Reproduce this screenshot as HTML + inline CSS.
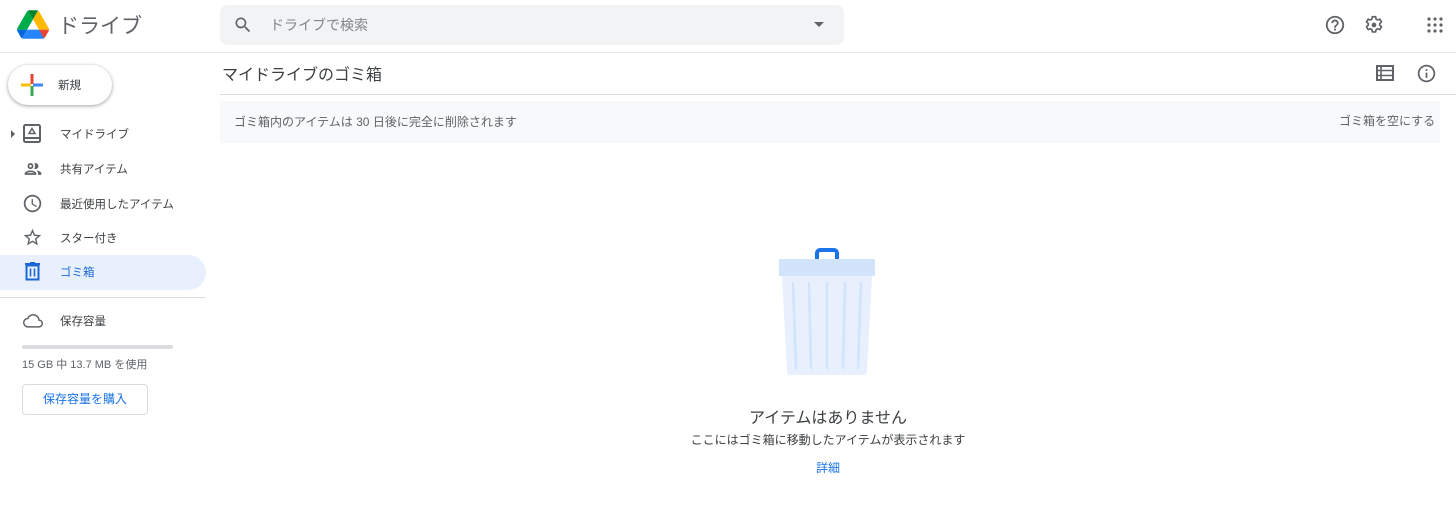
<!DOCTYPE html>
<html><head><meta charset="utf-8"><style>
*{margin:0;padding:0;box-sizing:border-box}
body{width:1456px;height:524px;background:#fff;font-family:"Liberation Sans","Noto Sans CJK JP",sans-serif;color:#3c4043;position:relative;overflow:hidden}
.a{position:absolute}
.t{font-size:11.5px;color:#3c4043}
</style></head><body>
<svg class="a" style="left:17px;top:10px" width="32" height="29" viewBox="0 0 87.3 78">
<path d="M6.6 66.85l3.85 6.65c.8 1.4 1.95 2.5 3.3 3.3L27.5 53H0c0 1.55.4 3.1 1.2 4.5z" fill="#0066da"/>
<path d="M43.65 25L29.9 1.2c-1.35.8-2.5 1.9-3.3 3.3L1.2 48.5A9.06 9.06 0 000 53h27.5z" fill="#00ac47"/>
<path d="M73.55 76.8c1.35-.8 2.5-1.9 3.3-3.3l1.6-2.75 7.650-13.25c.8-1.4 1.2-2.95 1.2-4.5H59.8l5.85 11.5z" fill="#ea4335"/>
<path d="M43.65 25L57.4 1.2C56.05.4 54.5 0 52.9 0H34.4c-1.6 0-3.15.45-4.5 1.2z" fill="#00832d"/>
<path d="M59.8 53H27.5L13.75 76.8c1.35.8 2.9 1.2 4.5 1.2h50.8c1.6 0 3.15-.45 4.5-1.2z" fill="#2684fc"/>
<path d="M73.4 26.5L60.7 4.5c-.8-1.4-1.950-2.5-3.3-3.3L43.65 25 59.8 53h27.45c0-1.55-.4-3.1-1.2-4.5z" fill="#ffba00"/>
</svg>
<div class="a" style="left:58px;top:10px;font-size:21px;color:#5f6368">ドライブ</div>
<div class="a" style="left:220px;top:5px;width:624px;height:40px;background:#f1f3f4;border-radius:8px"></div>
<svg class="a" style="left:233px;top:15px" width="20" height="20" viewBox="0 0 24 24"><path fill="#5f6368" d="M15.5 14h-.79l-.28-.27A6.47 6.47 0 0016 9.5 6.5 6.5 0 109.5 16c1.61 0 3.09-.59 4.23-1.57l.27.28v.79l5 4.99L20.49 19zm-6 0C7.01 14 5 11.99 5 9.5S7.01 5 9.5 5 14 7.01 14 9.5 11.99 14 9.5 14z"/></svg>
<div class="a" style="left:270px;top:15px;font-size:14px;color:#80868b">ドライブで検索</div>
<div class="a" style="left:814px;top:22px;border-left:5px solid transparent;border-right:5px solid transparent;border-top:5px solid #5f6368"></div>
<svg class="a" style="left:1324px;top:14px" width="22" height="22" viewBox="0 0 24 24"><path fill="#5f6368" d="M11 18h2v-2h-2v2zm1-16C6.48 2 2 6.48 2 12s4.48 10 10 10 10-4.48 10-10S17.52 2 12 2zm0 18c-4.41 0-8-3.59-8-8s3.59-8 8-8 8 3.59 8 8-3.59 8-8 8zm0-14c-2.210 0-4 1.79-4 4h2c0-1.1.9-2 2-2s2 .9 2 2c0 2-3 1.75-3 5h2c0-2.25 3-2.5 3-5 0-2.21-1.79-4-4-4z"/></svg>
<svg class="a" style="left:1363px;top:14px" width="22" height="22" viewBox="0 0 24 24"><path fill="none" stroke="#5f6368" stroke-width="1.8" stroke-linejoin="round" d="M10.2 3h3.6l.5 2.6 1.6.9 2.5-.9 1.8 3.1-2 1.7v1.8l2 1.7-1.8 3.1-2.5-.9-1.6.9-.5 2.6h-3.6l-.5-2.6-1.6-.9-2.5.9-1.8-3.1 2-1.7v-1.8l-2-1.7 1.8-3.1 2.5.9 1.6-.9z"/><circle cx="12" cy="12" r="2.6" fill="#5f6368"/></svg>
<svg class="a" style="left:1427px;top:17px" width="16" height="16" viewBox="0 0 16 16" fill="#5f6368"><circle cx="2" cy="2" r="1.6"/><circle cx="8" cy="2" r="1.6"/><circle cx="14" cy="2" r="1.6"/><circle cx="2" cy="8" r="1.6"/><circle cx="8" cy="8" r="1.6"/><circle cx="14" cy="8" r="1.6"/><circle cx="2" cy="14" r="1.6"/><circle cx="8" cy="14" r="1.6"/><circle cx="14" cy="14" r="1.6"/></svg>
<div class="a" style="left:0;top:52px;width:1456px;height:1px;background:#e8eaed"></div>
<div class="a" style="left:8px;top:65px;width:104px;height:40px;border-radius:20px;background:#fff;box-shadow:0 1px 3px rgba(60,64,67,.3),0 1px 3px 1px rgba(60,64,67,.15)"></div>
<svg class="a" style="left:21px;top:74px" width="22" height="22" viewBox="0 0 22 22"><rect x="9.5" y="0" width="3" height="10" fill="#ea4335"/><rect x="12" y="9.5" width="10" height="3" fill="#4285f4"/><rect x="9.5" y="12" width="3" height="10" fill="#34a853"/><rect x="0" y="9.5" width="10" height="3" fill="#fbbc04"/></svg>
<div class="a t" style="left:58px;top:77px">新規</div>
<div class="a" style="left:11px;top:130px;border-top:4px solid transparent;border-bottom:4px solid transparent;border-left:4px solid #5f6368"></div>
<svg class="a" style="left:23px;top:124px" width="18" height="19" viewBox="0 0 18 19"><rect x="1" y="1" width="16" height="17" rx="1.5" fill="none" stroke="#5f6368" stroke-width="2"/><rect x="2" y="13" width="14" height="2" fill="#5f6368"/><path d="M9 4.5l3 5H6z" fill="none" stroke="#5f6368" stroke-width="1.5"/></svg>
<div class="a t" style="left:60px;top:126px">マイドライブ</div>
<svg class="a" style="left:22px;top:159px" width="22" height="20" viewBox="0 0 24 24"><path fill="#5f6368" d="M9 13.75c-2.34 0-7 1.17-7 3.5V19h14v-1.75c0-2.33-4.66-3.5-7-3.5zM4.34 17c.84-.58 2.87-1.25 4.66-1.25s3.82.67 4.66 1.25H4.34zM9 12c1.93 0 3.5-1.57 3.5-3.5S10.93 5 9 5 5.5 6.57 5.5 8.5 7.07 12 9 12zm0-5c.83 0 1.5.67 1.5 1.5S9.83 10 9 10s-1.5-.67-1.5-1.5S8.17 7 9 7zm7.04 6.81c1.16.84 1.96 1.96 1.96 3.44V19h4v-1.75c0-2.02-3.5-3.17-5.96-3.44zM15 12c1.93 0 3.5-1.57 3.5-3.5S16.93 5 15 5c-.54 0-1.04.13-1.5.35.63.89 1 1.98 1 3.15s-.37 2.26-1 3.15c.46.22.96.35 1.5.35z"/></svg>
<div class="a t" style="left:60px;top:161px">共有アイテム</div>
<svg class="a" style="left:22px;top:193px" width="21" height="21" viewBox="0 0 24 24"><path fill="#5f6368" d="M11.99 2C6.47 2 2 6.48 2 12s4.47 10 9.99 10C17.52 22 22 17.52 22 12S17.52 2 11.990 2zM12 20c-4.42 0-8-3.58-8-8s3.58-8 8-8 8 3.58 8 8-3.58 8-8 8zm.5-13H11v6l5.25 3.15.75-1.23-4.5-2.67z"/></svg>
<div class="a t" style="left:60px;top:196px">最近使用したアイテム</div>
<svg class="a" style="left:22px;top:227px" width="21" height="21" viewBox="0 0 24 24"><path fill="#5f6368" d="M22 9.24l-7.19-.62L12 2 9.19 8.63 2 9.24l5.46 4.73L5.82 21 12 17.27 18.18 21l-1.63-7.03L22 9.24zM12 15.4l-3.76 2.27 1-4.28-3.32-2.88 4.38-.38L12 6.1l1.71 4.04 4.38.38-3.32 2.88 1 4.28L12 15.4z"/></svg>
<div class="a t" style="left:60px;top:230px">スター付き</div>
<div class="a" style="left:0;top:255px;width:206px;height:35px;background:#e8f0fe;border-radius:0 18px 18px 0"></div>
<svg class="a" style="left:24px;top:262px" width="17" height="19" viewBox="0 0 17 19"><path d="M1 2h15M6 1h5" stroke="#1967d2" stroke-width="2"/><rect x="2.5" y="3.5" width="12" height="14" fill="none" stroke="#1967d2" stroke-width="2"/><path d="M6.5 6.5v8M10.5 6.5v8" stroke="#1967d2" stroke-width="1.6"/></svg>
<div class="a t" style="left:60px;top:264px;color:#1967d2">ゴミ箱</div>
<div class="a" style="left:0;top:297px;width:206px;height:1px;background:#dadce0"></div>
<svg class="a" style="left:22px;top:311px" width="22" height="20" viewBox="0 0 24 24"><path fill="none" stroke="#5f6368" stroke-width="1.8" d="M6 19h13a4 4 0 00.3-8A7 7 0 005.8 9 5 5 0 006 19z"/></svg>
<div class="a t" style="left:60px;top:313px">保存容量</div>
<div class="a" style="left:22px;top:345px;width:151px;height:4px;background:#dadce0;border-radius:2px"></div>
<div class="a" style="left:22px;top:356px;font-size:11px;color:#5f6368">15 GB 中 13.7 MB を使用</div>
<div class="a" style="left:22px;top:384px;width:126px;height:31px;border:1px solid #dadce0;border-radius:4px;font-size:12px;color:#1a73e8;text-align:center;line-height:28px">保存容量を購入</div>
<div class="a" style="left:222px;top:61px;font-size:16px;color:#3c4043">マイドライブのゴミ箱</div>
<svg class="a" style="left:1376px;top:65px" width="18" height="16" viewBox="0 0 18 16"><rect x="1" y="1" width="16" height="14" fill="none" stroke="#5f6368" stroke-width="2"/><path d="M1 5.5h16M1 10.5h16M5 1v14" stroke="#5f6368" stroke-width="1.6"/></svg>
<svg class="a" style="left:1416px;top:63px" width="21" height="21" viewBox="0 0 24 24"><path fill="#5f6368" d="M11 7h2v2h-2zm0 4h2v6h-2zm1-9C6.48 2 2 6.48 2 12s4.48 10 10 10 10-4.48 10-10S17.52 2 12 2zm0 18c-4.41 0-8-3.59-8-8s3.59-8 8-8 8 3.59 8 8-3.59 8-8 8z"/></svg>
<div class="a" style="left:220px;top:94px;width:1236px;height:1px;background:#dadce0"></div>
<div class="a" style="left:220px;top:101px;width:1220px;height:42px;background:#f8f9fa"></div>
<div class="a t" style="left:234px;top:113px;font-size:12px;color:#5f6368">ゴミ箱内のアイテムは 30 日後に完全に削除されます</div>
<div class="a t" style="left:1339px;top:112px;font-size:12px;color:#5f6368">ゴミ箱を空にする</div>
<svg class="a" style="left:778px;top:248px" width="98" height="128" viewBox="0 0 98 128">
<path d="M39 12V5a3 3 0 013-3h14a3 3 0 013 3v7" fill="none" stroke="#1a73e8" stroke-width="4"/>
<rect x="1" y="11" width="96" height="17" fill="#d2e3fc"/>
<path d="M4 28h90l-5 96a3 3 0 01-3 3H12a3 3 0 01-3-3z" fill="#e8f0fe"/>
<g stroke="#d2e3fc" stroke-width="2.5" stroke-linecap="round"><path d="M15 35l3 85M31 35l2 85M49 35v85M67 35l-2 85M83 35l-3 85"/></g>
</svg>
<div class="a" style="left:0;top:404px;width:1656px;text-align:center;font-size:16px;color:#3c4043">アイテムはありません</div>
<div class="a" style="left:0;top:431px;width:1656px;text-align:center;font-size:12px;color:#3c4043">ここにはゴミ箱に移動したアイテムが表示されます</div>
<div class="a" style="left:0;top:459px;width:1656px;text-align:center;font-size:12px;color:#1a73e8">詳細</div>
</body></html>
